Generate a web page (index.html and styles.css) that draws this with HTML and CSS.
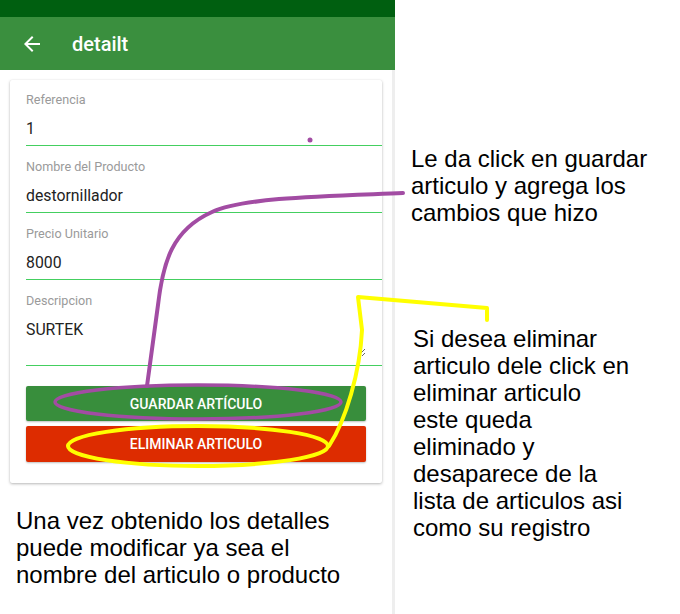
FILE: index.html
```html
<!DOCTYPE html>
<html lang="es">
<head>
<meta charset="utf-8">
<title>detailt</title>
<link rel="stylesheet" href="styles.css">
</head>
<body>
<div class="page">
  <div class="phone">
    <div class="status"></div>
    <header class="toolbar">
      <svg class="back" viewBox="0 0 24 24" width="24" height="24"><path d="M20 11H7.83l5.59-5.59L12 4l-8 8 8 8 1.41-1.41L7.83 13H20v-2z" fill="#fff"/></svg>
      <h1 class="title">detailt</h1>
    </header>
    <div class="screen">
      <div class="content">
        <form class="card">
          <div class="field">
            <label class="label">Referencia</label>
            <div class="control"><input class="input" type="text" value="1"></div>
          </div>
          <div class="field">
            <label class="label">Nombre del Producto</label>
            <div class="control"><input class="input" type="text" value="destornillador"></div>
          </div>
          <div class="field">
            <label class="label">Precio Unitario</label>
            <div class="control"><input class="input" type="text" value="8000"></div>
          </div>
          <div class="field">
            <label class="label">Descripcion</label>
            <div class="control control-area"><textarea class="input area">SURTEK</textarea></div>
          </div>
          <div class="actions">
            <button type="button" class="btn btn-save">GUARDAR ARTÍCULO</button>
            <button type="button" class="btn btn-delete">ELIMINAR ARTICULO</button>
          </div>
        </form>
        <p class="note note-left">Una vez obtenido los detalles<br>puede modificar ya sea el<br>nombre del articulo o producto</p>
      </div>
      <div class="scrollbar"></div>
    </div>
  </div>
  <div class="notes">
    <p class="note note-save">Le da click en guardar<br>articulo y agrega los<br>cambios que hizo</p>
    <p class="note note-delete">Si desea eliminar<br>articulo dele click en<br>eliminar articulo<br>este queda<br>eliminado y<br>desaparece de la<br>lista de articulos asi<br>como su registro</p>
  </div>
  <svg class="marks" width="680" height="614" viewBox="0 0 680 614">
    <g fill="none" stroke-linecap="round" stroke-linejoin="round">
      <path d="M403,193 C330,196 245,197 212,212 C172,230 163,262 158,305 L147,386" stroke="#a24ca3" stroke-width="4"/>
      <ellipse cx="198" cy="402" rx="143" ry="17" stroke="#a24ca3" stroke-width="3.5"/>
      <circle cx="310" cy="140" r="2.5" fill="#a24ca3" stroke="none"/>
      <path d="M329,446 C346,420 360,372 362,330 L358,297 L487,308 L487,320" stroke="#ffff00" stroke-width="4"/>
      <ellipse cx="198" cy="446" rx="130" ry="20" stroke="#ffff00" stroke-width="4"/>
    </g>
  </svg>
</div>
</body>
</html>
```

FILE: styles.css
```css
* { box-sizing: border-box; }
html, body { margin: 0; padding: 0; background: #fff; }
body { width: 680px; height: 614px; overflow: hidden; }

.page {
  position: relative;
  display: flex;
  width: 680px;
  height: 614px;
}

.phone {
  width: 395px;
  flex: none;
  display: flex;
  flex-direction: column;
  font-family: Roboto, "Noto Sans", sans-serif;
}

.status { height: 17px; background: #005f10; }

.toolbar {
  height: 53px;
  background: #3a8f3e;
  display: flex;
  align-items: center;
  padding-left: 20px;
  gap: 28px;
}
.back { display: block; flex: none; }
.title {
  margin: 0;
  color: #fff;
  font-size: 20px;
  font-weight: 500;
  line-height: 24px;
}

.screen { flex: 1; display: flex; }
.content { width: 392px; }
.scrollbar { width: 3px; background: #eeeeee; }

.card {
  margin: 10px 10px 0 10px;
  width: 372px;
  background: #fff;
  border-radius: 2px;
  box-shadow: 0 1px 3px rgba(0,0,0,0.28), 0 0 1px rgba(0,0,0,0.08);
  padding: 11px 0 21px 16px;
}

.field { margin-top: 12px; }
.field:first-child { margin-top: 0; }

.label {
  display: block;
  font-size: 12.6px;
  line-height: 16px;
  padding-top: 1px;
  color: #9a9a9a;
}

.control {
  padding: 12px 0 7px;
  border-bottom: 1px solid #44cf60;
}
.control-area { padding-bottom: 8px; }

.input {
  display: block;
  width: 100%;
  border: 0;
  outline: none;
  padding: 0;
  margin: 0;
  background: transparent;
  font-family: Roboto, "Noto Sans", sans-serif;
  font-size: 15.8px;
  line-height: 18px;
  height: 18px;
  color: #222;
}
.area {
  width: 340px;
  height: 36px;
  resize: vertical;
  overflow: hidden;
}

.actions {
  margin: 20px 16px 0 0;
  display: flex;
  flex-direction: column;
  gap: 5px;
}
.btn {
  display: block;
  width: 100%;
  height: 36px;
  border: 0;
  border-radius: 2px;
  color: #fff;
  font-family: Roboto, "Noto Sans", sans-serif;
  font-size: 14px;
  font-weight: 500;
  box-shadow: 0 1px 2px rgba(0,0,0,0.25);
  padding: 0;
}
.btn-save { background: #388e3c; height: 35px; }
.btn-delete { background: #dd2c00; }

.note {
  margin: 0;
  font-family: "Liberation Sans", Arial, sans-serif;
  font-size: 24px;
  line-height: 27px;
  color: #000;
  white-space: nowrap;
}
.note-left { margin: 24px 0 0 16px; }

.notes { display: flex; flex-direction: column; }
.note-save { margin: 145px 0 0 16px; }
.note-delete { margin: 99px 0 0 18px; }

.marks {
  position: absolute;
  left: 0;
  top: 0;
  pointer-events: none;
}
```
